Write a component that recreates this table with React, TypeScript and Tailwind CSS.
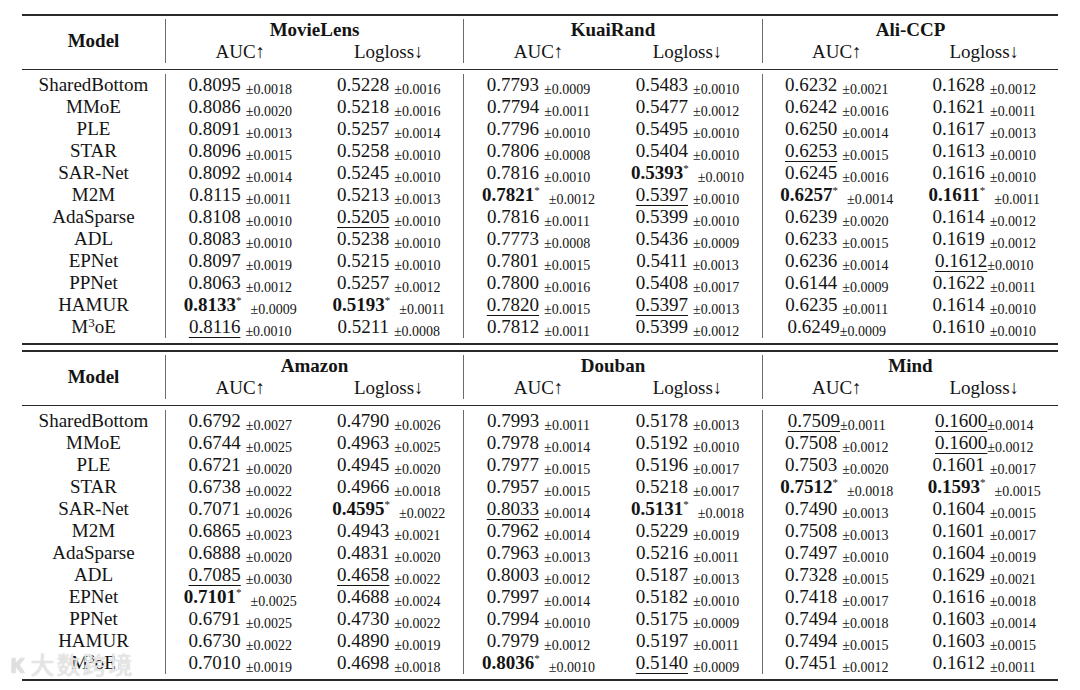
import React from "react";

// cell codes: "0.8095|0.0018" plain, "*" prefix = best (bold + star), "_" prefix = runner-up (underlined),
// "~" instead of "|" = no gap before the std
type Block = { name: string; cols: string[][] };

const models = ["SharedBottom", "MMoE", "PLE", "STAR", "SAR-Net", "M2M", "AdaSparse", "ADL", "EPNet", "PPNet", "HAMUR", "M3oE"];

const top: Block[] = [
  {
    name: "MovieLens",
    cols: [
      ["0.8095|0.0018", "0.8086|0.0020", "0.8091|0.0013", "0.8096|0.0015", "0.8092|0.0014", "0.8115|0.0011", "0.8108|0.0010", "0.8083|0.0010", "0.8097|0.0019", "0.8063|0.0012", "*0.8133|0.0009", "_0.8116|0.0010"],
      ["0.5228|0.0016", "0.5218|0.0016", "0.5257|0.0014", "0.5258|0.0010", "0.5245|0.0010", "0.5213|0.0013", "_0.5205|0.0010", "0.5238|0.0010", "0.5215|0.0010", "0.5257|0.0012", "*0.5193|0.0011", "0.5211|0.0008"],
    ],
  },
  {
    name: "KuaiRand",
    cols: [
      ["0.7793|0.0009", "0.7794|0.0011", "0.7796|0.0010", "0.7806|0.0008", "0.7816|0.0010", "*0.7821|0.0012", "0.7816|0.0011", "0.7773|0.0008", "0.7801|0.0015", "0.7800|0.0016", "_0.7820|0.0015", "0.7812|0.0011"],
      ["0.5483|0.0010", "0.5477|0.0012", "0.5495|0.0010", "0.5404|0.0010", "*0.5393|0.0010", "_0.5397|0.0010", "0.5399|0.0010", "0.5436|0.0009", "0.5411|0.0013", "0.5408|0.0017", "_0.5397|0.0013", "0.5399|0.0012"],
    ],
  },
  {
    name: "Ali-CCP",
    cols: [
      ["0.6232|0.0021", "0.6242|0.0016", "0.6250|0.0014", "_0.6253|0.0015", "0.6245|0.0016", "*0.6257|0.0014", "0.6239|0.0020", "0.6233|0.0015", "0.6236|0.0014", "0.6144|0.0009", "0.6235|0.0011", "0.6249~0.0009"],
      ["0.1628|0.0012", "0.1621|0.0011", "0.1617|0.0013", "0.1613|0.0010", "0.1616|0.0010", "*0.1611|0.0011", "0.1614|0.0012", "0.1619|0.0012", "_0.1612~0.0010", "0.1622|0.0011", "0.1614|0.0010", "0.1610|0.0010"],
    ],
  },
];

const bottom: Block[] = [
  {
    name: "Amazon",
    cols: [
      ["0.6792|0.0027", "0.6744|0.0025", "0.6721|0.0020", "0.6738|0.0022", "0.7071|0.0026", "0.6865|0.0023", "0.6888|0.0020", "_0.7085|0.0030", "*0.7101|0.0025", "0.6791|0.0025", "0.6730|0.0022", "0.7010|0.0019"],
      ["0.4790|0.0026", "0.4963|0.0025", "0.4945|0.0020", "0.4966|0.0018", "*0.4595|0.0022", "0.4943|0.0021", "0.4831|0.0020", "_0.4658|0.0022", "0.4688|0.0024", "0.4730|0.0022", "0.4890|0.0019", "0.4698|0.0018"],
    ],
  },
  {
    name: "Douban",
    cols: [
      ["0.7993|0.0011", "0.7978|0.0014", "0.7977|0.0015", "0.7957|0.0015", "_0.8033|0.0014", "0.7962|0.0014", "0.7963|0.0013", "0.8003|0.0012", "0.7997|0.0014", "0.7994|0.0010", "0.7979|0.0012", "*0.8036|0.0010"],
      ["0.5178|0.0013", "0.5192|0.0010", "0.5196|0.0017", "0.5218|0.0017", "*0.5131|0.0018", "0.5229|0.0019", "0.5216|0.0011", "0.5187|0.0013", "0.5182|0.0010", "0.5175|0.0009", "0.5197|0.0011", "_0.5140|0.0009"],
    ],
  },
  {
    name: "Mind",
    cols: [
      ["_0.7509~0.0011", "0.7508|0.0012", "0.7503|0.0020", "*0.7512|0.0018", "0.7490|0.0013", "0.7508|0.0013", "0.7497|0.0010", "0.7328|0.0015", "0.7418|0.0017", "0.7494|0.0018", "0.7494|0.0015", "0.7451|0.0012"],
      ["_0.1600~0.0014", "_0.1600~0.0012", "0.1601|0.0017", "*0.1593|0.0015", "0.1604|0.0015", "0.1601|0.0017", "0.1604|0.0019", "0.1629|0.0021", "0.1616|0.0018", "0.1603|0.0014", "0.1603|0.0015", "0.1612|0.0011"],
    ],
  },
];

function Cell({ code }: { code: string }) {
  const best = code.startsWith("*");
  const second = code.startsWith("_");
  const raw = best || second ? code.slice(1) : code;
  const tight = raw.includes("~");
  const [val, std] = raw.split(/[|~]/);
  return (
    <div className="h-[22px] leading-[22px] text-center whitespace-nowrap">
      <span className={best ? "font-bold" : second ? "underline decoration-1 underline-offset-[4px]" : ""}>{val}</span>
      {best && <span className="relative -top-[7px] text-[11px] leading-none">*</span>}
      <span className={`relative top-[3px] text-[14px] leading-none ${tight ? "" : best ? "ml-[9px]" : "ml-[5px]"}`}>±{std}</span>
    </div>
  );
}

function ModelName({ name }: { name: string }) {
  if (name === "M3oE") {
    return (
      <div className="h-[22px] leading-[22px] text-center">
        M<span className="relative -top-[6px] text-[13px] leading-none">3</span>oE
      </div>
    );
  }
  return <div className="h-[22px] leading-[22px] text-center">{name}</div>;
}

const cols = "grid grid-cols-[143px_298px_299px_296px]";

function Section({ blocks }: { blocks: Block[] }) {
  return (
    <div>
      <div className={`${cols} pt-[3px] pb-[6px]`}>
        <div className="flex items-center justify-center font-bold">Model</div>
        {blocks.map((b) => (
          <div key={b.name} className="border-l border-[#6b6b6b]">
            <div className="h-[22px] leading-[22px] text-center font-bold">{b.name}</div>
            <div className="grid grid-cols-2 h-[22px] leading-[22px] text-center">
              <div>AUC↑</div>
              <div>Logloss↓</div>
            </div>
          </div>
        ))}
      </div>
      <div className="h-px bg-[#2a2a2a]" />
      <div className={`${cols} pt-[4px] pb-[5px]`}>
        <div>
          {models.map((m) => (
            <ModelName key={m} name={m} />
          ))}
        </div>
        {blocks.map((b) => (
          <div key={b.name} className="border-l border-[#6b6b6b] grid grid-cols-2">
            {b.cols.map((c, i) => (
              <div key={i}>
                {c.map((code, j) => (
                  <Cell key={j} code={code} />
                ))}
              </div>
            ))}
          </div>
        ))}
      </div>
    </div>
  );
}

export default function App() {
  return (
    <div className="relative w-[1080px] h-[690px] bg-white text-[#141414] text-[19px] font-['Liberation_Serif','Times_New_Roman',serif] overflow-hidden">
      <div className="mx-[22px] pt-[14px]">
        <div className="h-[2px] bg-[#2a2a2a]" />
        <Section blocks={top} />
        <div className="h-[2px] bg-[#2a2a2a]" />
        <div className="h-[5px]" />
        <div className="h-[2px] bg-[#2a2a2a]" />
        <Section blocks={bottom} />
        <div className="h-[2px] bg-[#2a2a2a]" />
      </div>
      {/* watermark */}
      <div className="absolute left-[10px] top-[652px] flex items-center gap-[6px] text-white/70 pointer-events-none">
        <span className="text-[22px] leading-none font-['Noto_Sans',sans-serif] font-bold [text-shadow:0_0_1px_#999]">K</span>
        <span className="text-[24px] leading-none font-['Noto_Sans_CJK_SC',sans-serif] tracking-[2px] [text-shadow:0_0_1px_#aaa]">大数跨境</span>
      </div>
    </div>
  );
}
